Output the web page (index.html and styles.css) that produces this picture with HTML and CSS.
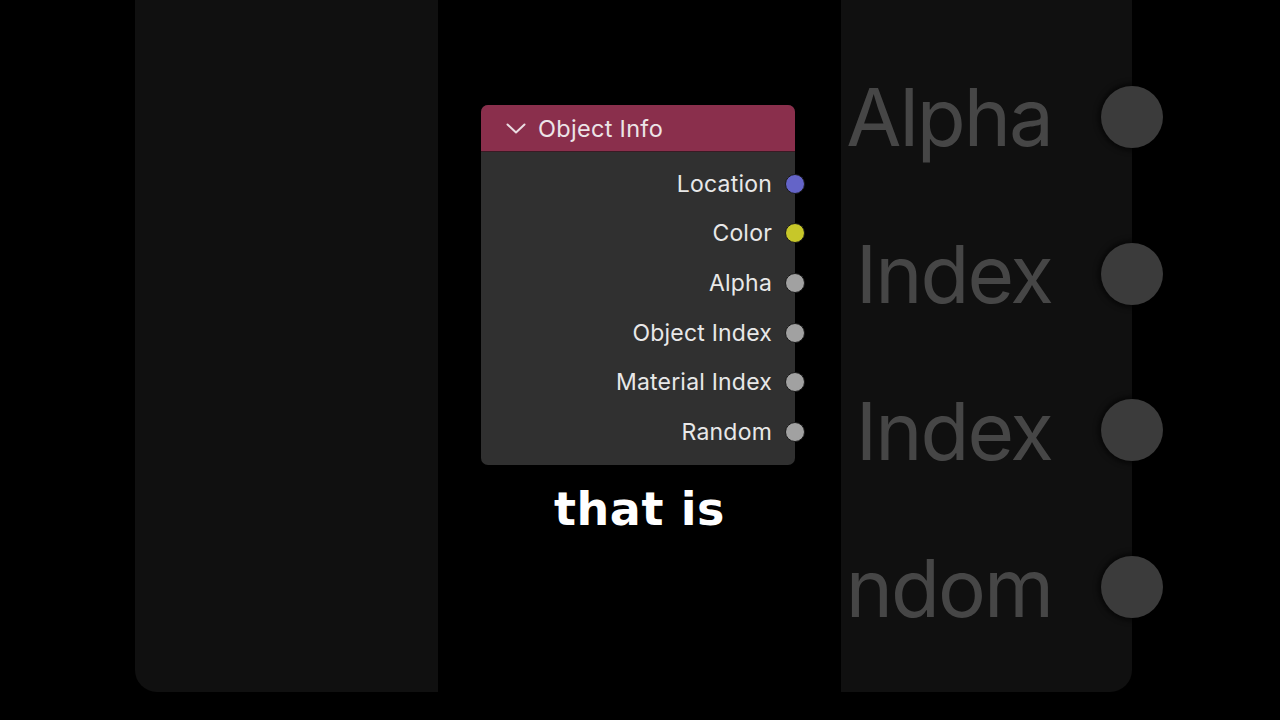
FILE: index.html
```html
<!DOCTYPE html>
<html lang="en">
<head>
<meta charset="utf-8">
<title>Object Info</title>
<link rel="stylesheet" href="styles.css">
</head>
<body>
<div class="stage">
  <div class="panel panel-left"></div>
  <div class="center">
    <div class="node">
      <div class="node-header">
        <svg class="chevron" width="20" height="11" viewBox="0 0 20 11"><path d="M1.5 1.5 L10 9.5 L18.5 1.5" fill="none" stroke="#eadde2" stroke-width="2" stroke-linecap="round" stroke-linejoin="round"/></svg>
        <span class="node-title">Object Info</span>
      </div>
      <div class="node-body">
        <div class="row"><span class="label">Location</span><span class="socket vec"></span></div>
        <div class="row"><span class="label">Color</span><span class="socket col"></span></div>
        <div class="row"><span class="label">Alpha</span><span class="socket val"></span></div>
        <div class="row"><span class="label">Object Index</span><span class="socket val"></span></div>
        <div class="row"><span class="label">Material Index</span><span class="socket val"></span></div>
        <div class="row"><span class="label">Random</span><span class="socket val"></span></div>
      </div>
    </div>
    <div class="caption">that is</div>
  </div>
  <div class="panel panel-right">
    <div class="big-row"><span class="big-label">Alpha</span><span class="big-socket"></span></div>
    <div class="big-row"><span class="big-label">Index</span><span class="big-socket"></span></div>
    <div class="big-row"><span class="big-label">Index</span><span class="big-socket"></span></div>
    <div class="big-row"><span class="big-label">ndom</span><span class="big-socket"></span></div>
  </div>
</div>
</body>
</html>
```
FILE: styles.css
```css
html, body {
  margin: 0;
  padding: 0;
  background: #000;
  width: 1280px;
  height: 720px;
  overflow: hidden;
}

.stage {
  display: flex;
  height: 720px;
  padding-left: 135px;
  box-sizing: border-box;
  font-family: "Inter", "Noto Sans", sans-serif;
}

.panel {
  height: 692px;
  background: #101010;
  flex: none;
}

.panel-left {
  width: 303px;
  border-bottom-left-radius: 22px;
}

.panel-right {
  width: 291px;
  border-bottom-right-radius: 22px;
  padding-top: 38.6px;
  box-sizing: border-box;
}

.center {
  width: 403px;
  flex: none;
  background: #000;
  padding-top: 105px;
  box-sizing: border-box;
  display: flex;
  flex-direction: column;
  align-items: center;
}

.node {
  width: 314px;
  margin-left: -3px;
  border-radius: 7px;
  background: #303030;
}

.node-header {
  height: 46px;
  background: #8a2f4c;
  border-radius: 7px 7px 0 0;
  border-bottom: 1.5px solid #3a1a24;
  display: flex;
  align-items: center;
  padding-left: 25px;
}

.chevron {
  display: block;
  margin-right: 12px;
}

.node-title {
  color: #ece4e7;
  font-size: 23.5px;
  letter-spacing: 0.3px;
}

.node-body {
  padding: 7px 0 8px;
}

.row {
  height: 49.6px;
  display: flex;
  align-items: center;
  justify-content: flex-end;
}

.label {
  color: #e8e8e8;
  font-size: 23px;
  letter-spacing: 0.2px;
  white-space: nowrap;
}

.socket {
  width: 18px;
  height: 18px;
  border-radius: 50%;
  border: 1px solid #1a1a1a;
  margin-left: 13px;
  margin-right: -10px;
  flex: none;
}

.socket.vec { background: #6464c8; }
.socket.col { background: #c7c729; }
.socket.val { background: #a1a1a1; }

.caption {
  margin-top: 17px;
  color: #fff;
  font-family: "DejaVu Sans", "Liberation Sans", sans-serif;
  font-weight: bold;
  font-size: 46px;
  letter-spacing: 0.6px;
}

.big-row {
  height: 156.7px;
  display: flex;
  align-items: center;
  justify-content: flex-end;
}

.big-label {
  color: #464646;
  font-size: 80px;
  letter-spacing: -2px;
  white-space: nowrap;
  filter: blur(0.6px);
}

.big-socket {
  width: 62px;
  height: 62px;
  border-radius: 50%;
  background: #3b3b3b;
  margin-left: 49px;
  margin-right: -31px;
  flex: none;
  box-shadow: 0 0 5px 3px rgba(0, 0, 0, 0.55);
  filter: blur(0.6px);
}
```
